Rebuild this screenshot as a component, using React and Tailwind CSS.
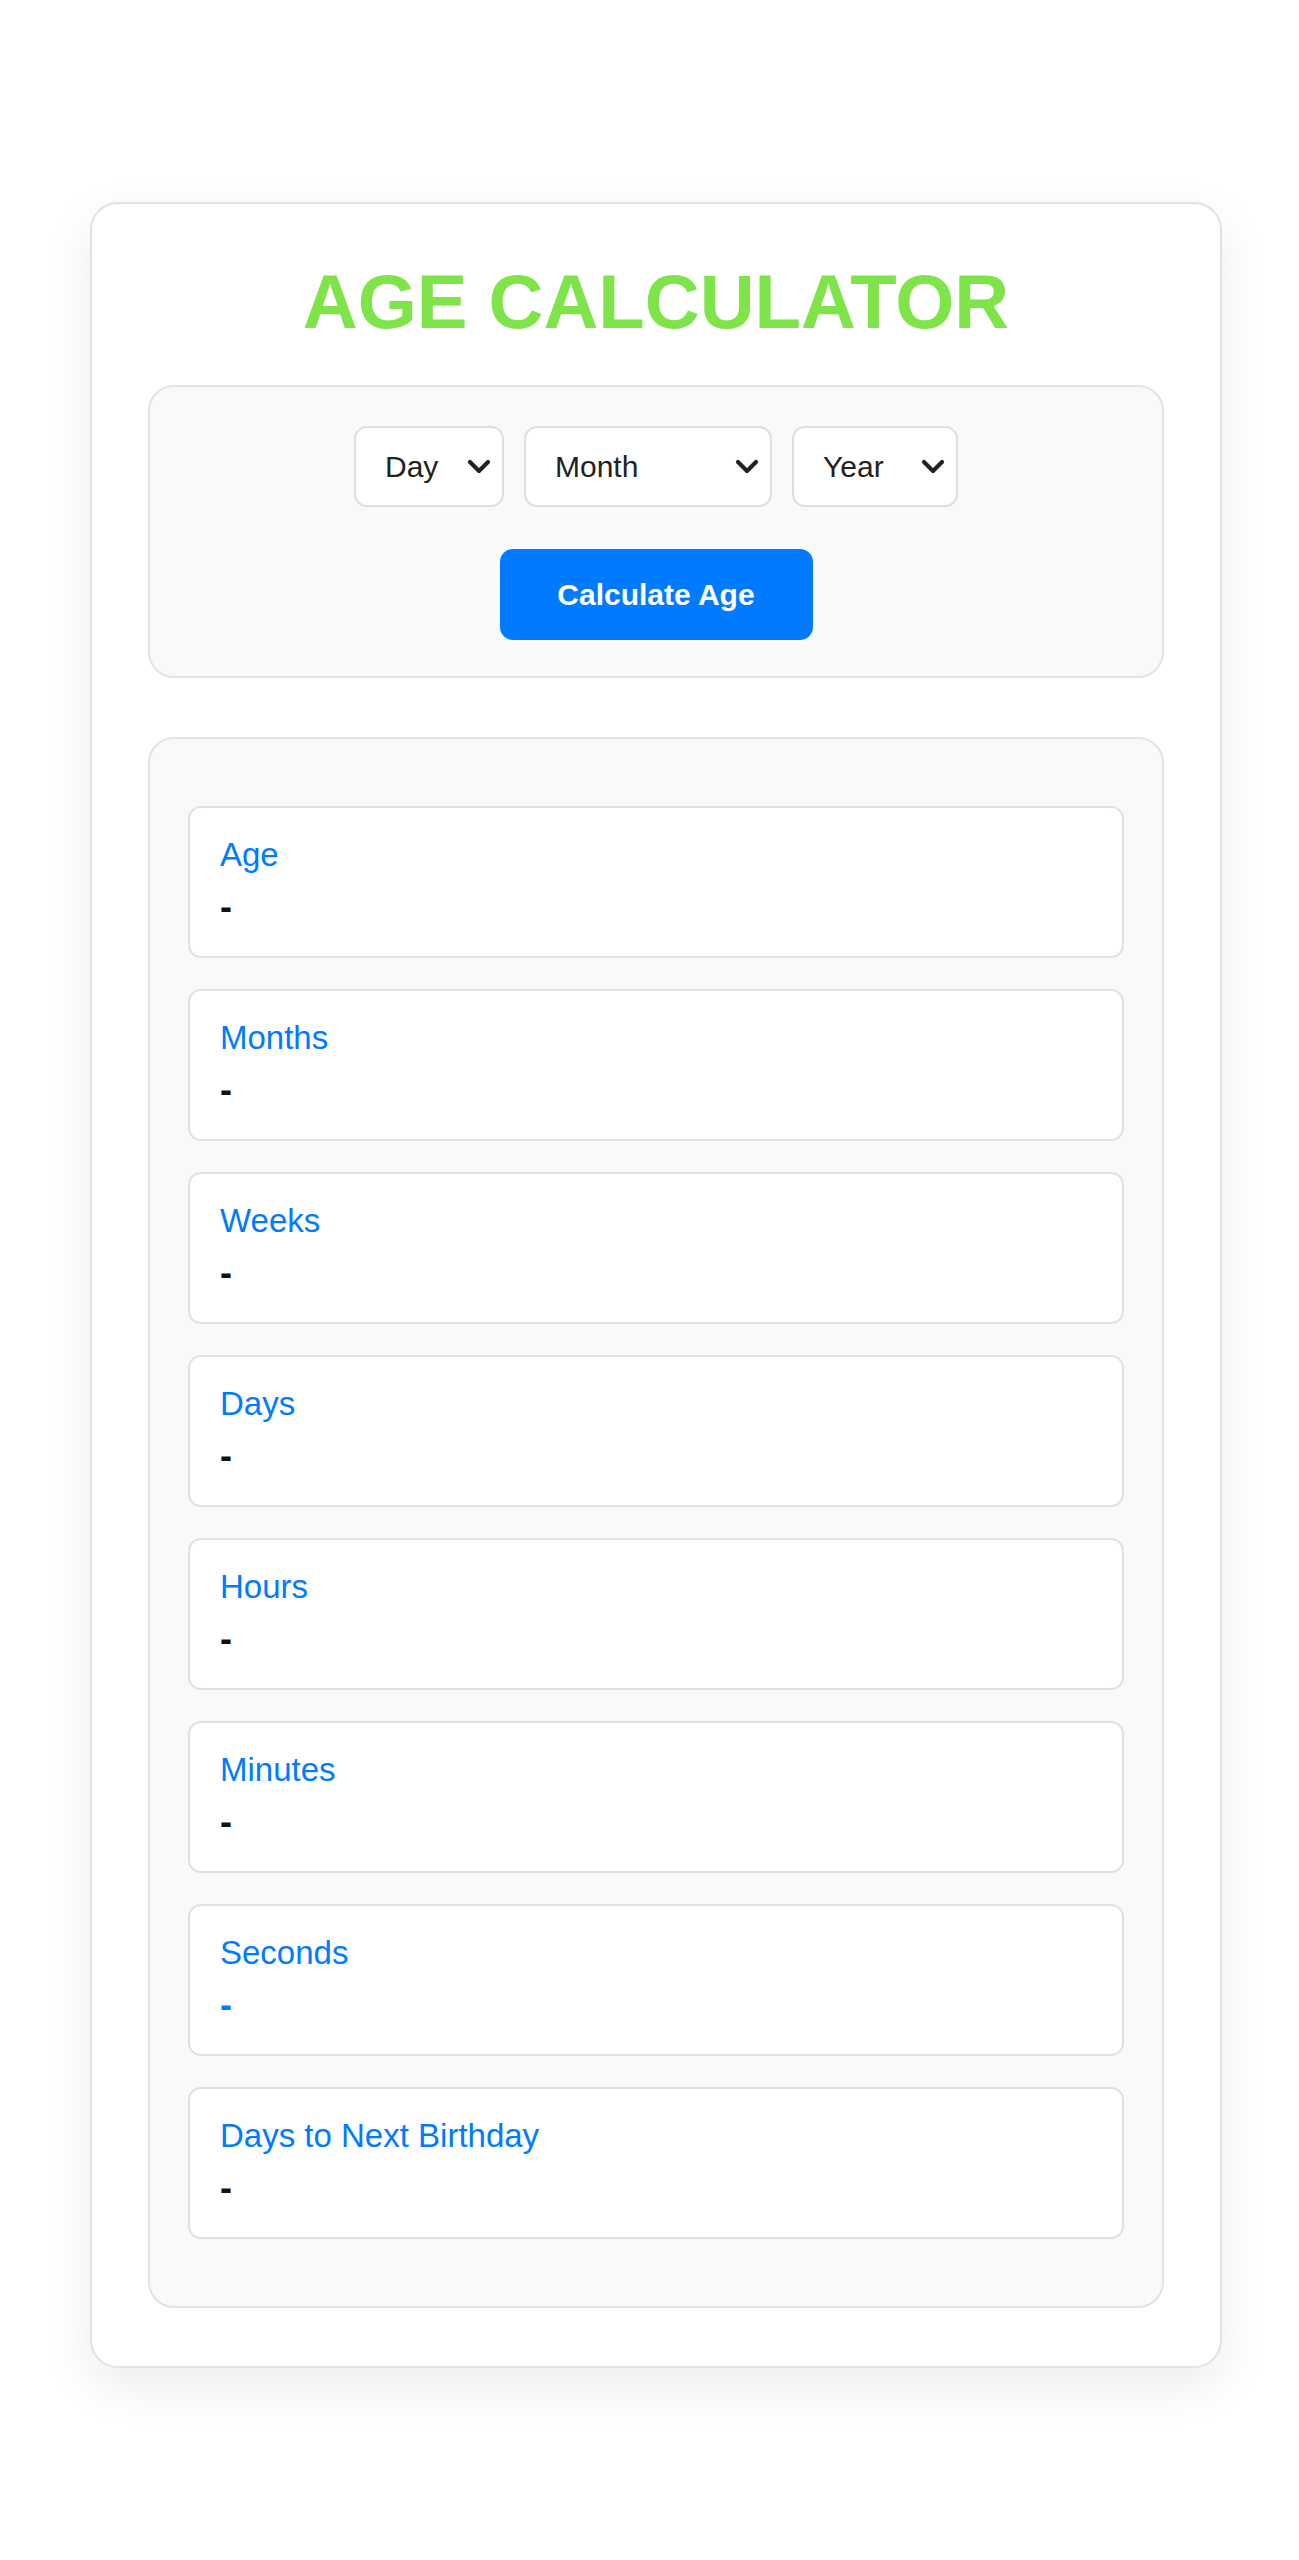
import React, { useState } from 'react';

const results = [
  { label: 'Age' },
  { label: 'Months' },
  { label: 'Weeks' },
  { label: 'Days' },
  { label: 'Hours' },
  { label: 'Minutes' },
  { label: 'Seconds', blue: true },
  { label: 'Days to Next Birthday' },
];

const Chevron = () => (
  <svg width="24" height="15" viewBox="0 0 24 15" fill="none" className="shrink-0">
    <path d="M3 3l9 9 9-9" stroke="#222" strokeWidth="4.2" strokeLinecap="round" strokeLinejoin="round" />
  </svg>
);

const Select = ({ value, width }) => (
  <div
    className={`${width} h-[81px] bg-white border-2 border-[#dedede] rounded-[13px] flex items-center justify-between pl-[29px] pr-[11px] text-[30px] text-[#222]`}
  >
    <span>{value}</span>
    <Chevron />
  </div>
);

const App = () => {
  const [day] = useState('Day');
  const [month] = useState('Month');
  const [year] = useState('Year');

  return (
    <div className="min-h-[2560px] bg-white pt-[202px] font-['Liberation_Sans',Arial,sans-serif]">
      <div className="ml-[90px] w-[1132px] bg-white border-2 border-[#e2e2e2] rounded-[28px] shadow-[0_18px_50px_rgba(0,0,0,0.08)] px-[56px] pt-[60px] pb-[58px]">
        {/* Title */}
        <h1 className="text-center text-[76px] leading-none font-bold text-[#7fe34a]">AGE CALCULATOR</h1>

        {/* Date picker */}
        <div className="mt-[45px] bg-[#f8f9fa] border-2 border-[#e3e3e3] rounded-[26px] pt-[39px] pb-[36px] flex flex-col items-center">
          <div className="flex gap-[20px]">
            <Select value={day} width="w-[150px]" />
            <Select value={month} width="w-[248px]" />
            <Select value={year} width="w-[166px]" />
          </div>
          <button className="mt-[42px] w-[313px] h-[91px] bg-[#007bff] rounded-[13px] text-white font-bold text-[30px]">
            Calculate Age
          </button>
        </div>

        {/* Results */}
        <div className="mt-[59px] bg-[#f8f9fa] border-2 border-[#e3e3e3] rounded-[26px] px-[38px] pt-[67px] pb-[67px] flex flex-col gap-[31px]">
          {results.map((r) => (
            <div
              key={r.label}
              className="h-[152px] bg-white border-2 border-[#e0e0e0] rounded-[13px] pl-[30px] pt-[22px]"
            >
              <div className="text-[33px] text-[#007bff]">{r.label}</div>
              <div className={`text-[36px] font-bold ${r.blue ? 'text-[#007bff]' : 'text-[#111]'}`}>-</div>
            </div>
          ))}
        </div>
      </div>
    </div>
  );
};

export default App;
